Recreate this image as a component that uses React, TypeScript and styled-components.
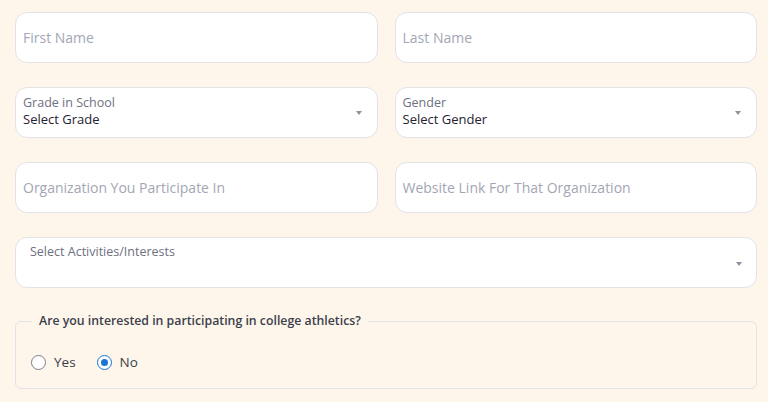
import React from "react";
import styled, { createGlobalStyle } from "styled-components";

const GlobalStyle = createGlobalStyle`
  html, body {
    margin: 0;
    padding: 0;
    background: #fef6eb;
  }
  body {
    font-family: "Open Sans", "Noto Sans", sans-serif;
  }
`;

const Form = styled.form`
  padding: 12px 11px 14px 15px;
  display: flex;
  flex-direction: column;
  gap: 24px;
`;

const Row = styled.div`
  display: grid;
  grid-template-columns: 1fr 1fr;
  gap: 17px;
`;

const Box = styled.div`
  position: relative;
  height: 51px;
  box-sizing: border-box;
  background: #ffffff;
  border: 1px solid #e2e2e7;
  border-radius: 12px;
  display: flex;
  align-items: center;
  padding: 0 7px;
`;

const Input = styled.input`
  border: none;
  outline: none;
  background: transparent;
  width: 100%;
  padding: 0;
  font-family: inherit;
  font-size: 14px;
  color: #333;

  &::placeholder {
    color: #a3a6b4;
  }
`;

const SelectBody = styled.div`
  flex: 1;
  display: flex;
  flex-direction: column;
  padding-bottom: 3px;
`;

const SmallLabel = styled.span`
  font-size: 12.5px;
  line-height: 16px;
  color: #6d7080;
`;

const Value = styled.span`
  font-size: 13px;
  line-height: 17px;
  color: #1f2230;
`;

const Caret = styled.span`
  width: 0;
  height: 0;
  border-left: 3.5px solid transparent;
  border-right: 3.5px solid transparent;
  border-top: 4px solid #8e91a0;
  margin-right: 8px;
`;

const MultiBox = styled(Box)`
  align-items: flex-start;
  padding: 6px 14px 0 14px;
`;

const MultiLabel = styled.span`
  flex: 1;
  font-size: 12.5px;
  line-height: 16px;
  color: #6d7080;
`;

const MultiCaret = styled(Caret)`
  margin-top: 18px;
  margin-right: 0;
`;

const Fieldset = styled.fieldset`
  margin: 0;
  padding: 23px 0 17px 15px;
  border: 1px solid #e2e2e7;
  border-radius: 6px;
`;

const Legend = styled.legend`
  margin-left: 1px;
  padding: 0 7px;
  font-size: 12.3px;
  line-height: 18px;
  font-weight: 600;
  color: #3b3e4c;
`;

const Options = styled.div`
  display: flex;
  gap: 21px;
`;

const Option = styled.label`
  display: flex;
  align-items: center;
  gap: 8px;
  font-size: 13.5px;
  line-height: 18px;
  color: #3b3e4c;
`;

const Radio = styled.span<{ $checked?: boolean }>`
  width: 15px;
  height: 15px;
  box-sizing: border-box;
  border-radius: 50%;
  border: 1.5px solid ${(p) => (p.$checked ? "#1976d2" : "#7a7d89")};
  background: #fff;
  display: flex;
  align-items: center;
  justify-content: center;

  &::after {
    content: "";
    width: 7px;
    height: 7px;
    border-radius: 50%;
    background: ${(p) => (p.$checked ? "#1976d2" : "transparent")};
  }
`;

const TextField = ({ placeholder }: { placeholder: string }) => (
  <Box>
    <Input placeholder={placeholder} />
  </Box>
);

const SelectField = ({ label, value }: { label: string; value: string }) => (
  <Box>
    <SelectBody>
      <SmallLabel>{label}</SmallLabel>
      <Value>{value}</Value>
    </SelectBody>
    <Caret />
  </Box>
);

export default function App() {
  return (
    <>
      <GlobalStyle />
      <Form>
        <Row>
          <TextField placeholder="First Name" />
          <TextField placeholder="Last Name" />
        </Row>
        <Row>
          <SelectField label="Grade in School" value="Select Grade" />
          <SelectField label="Gender" value="Select Gender" />
        </Row>
        <Row>
          <TextField placeholder="Organization You Participate In" />
          <TextField placeholder="Website Link For That Organization" />
        </Row>
        <MultiBox>
          <MultiLabel>Select Activities/Interests</MultiLabel>
          <MultiCaret />
        </MultiBox>
        <Fieldset>
          <Legend>Are you interested in participating in college athletics?</Legend>
          <Options>
            <Option>
              <Radio />
              Yes
            </Option>
            <Option>
              <Radio $checked />
              No
            </Option>
          </Options>
        </Fieldset>
      </Form>
    </>
  );
}
